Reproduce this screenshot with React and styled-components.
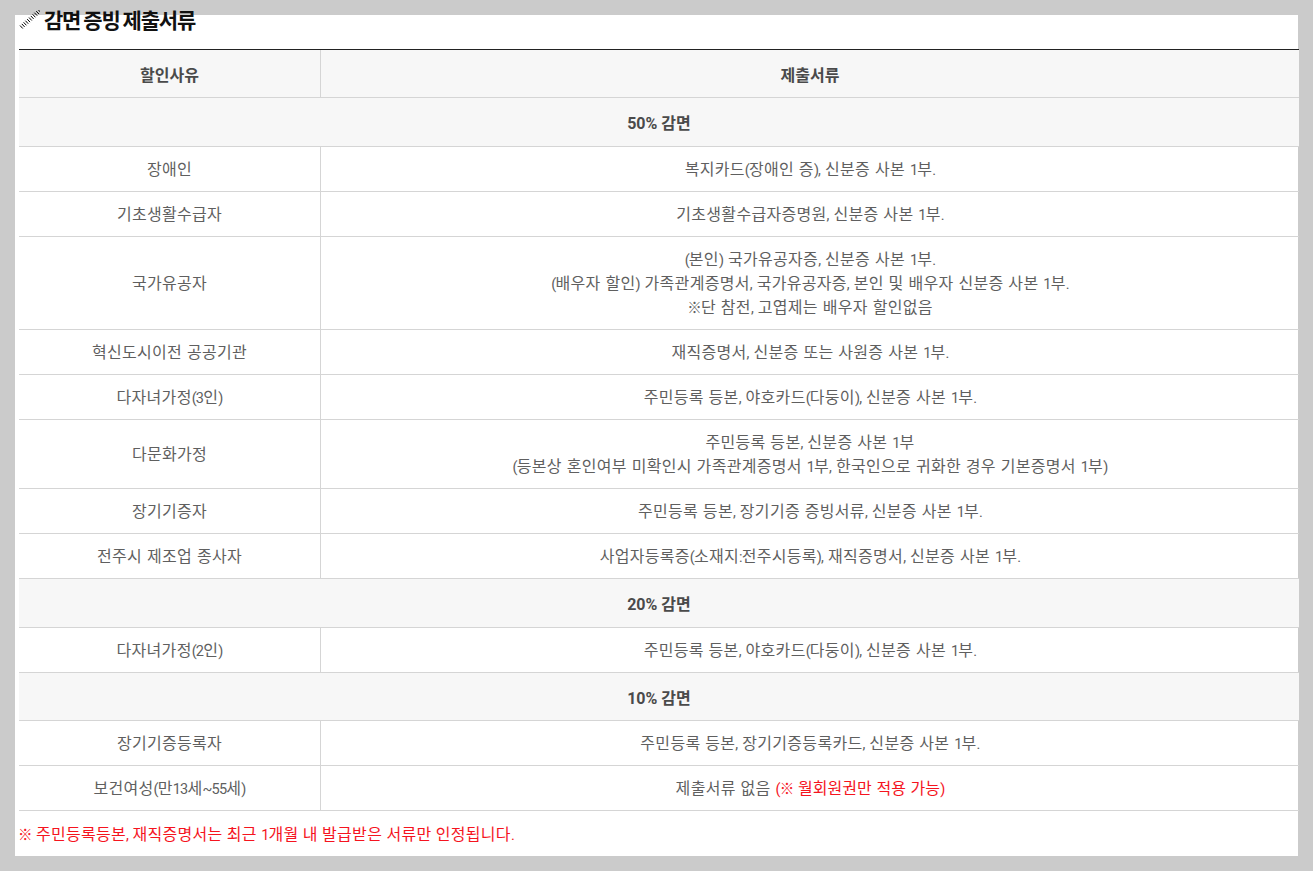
import React from 'react';
import styled, { createGlobalStyle } from 'styled-components';

const GlobalStyle = createGlobalStyle`
  html, body {
    margin: 0;
    padding: 0;
    background: #cbcbcb;
  }
  body {
    font-family: Roboto, "Noto Sans CJK KR", sans-serif;
    font-size: 16px;
    color: #5f5f5f;
  }
`;

const Page = styled.div`
  padding: 15px;
  height: 871px;
  box-sizing: border-box;
  overflow: hidden;
`;

const Panel = styled.div`
  display: flow-root;
  background: #fff;
  height: 841px;
  padding-left: 4px;
  box-sizing: border-box;
`;

const Title = styled.h3`
  display: flex;
  align-items: flex-start;
  gap: 4px;
  margin: -10px 0 0;
  height: 44px;
  font-family: "Noto Sans CJK KR", sans-serif;
  font-size: 21px;
  line-height: 28px;
  font-weight: 700;
  letter-spacing: -1.2px;
  word-spacing: -0.5px;
  color: #111;
`;

const TitleIcon = styled.svg`
  flex: none;
  margin-top: 5px;
`;

const Table = styled.table`
  width: 1280px;
  border-collapse: separate;
  border-spacing: 0;
  table-layout: fixed;
  border-top: 1px solid #222;
`;

const HeadCell = styled.th`
  background: #f7f7f7;
  padding: ${p => (p.$compact ? '14px 0 9px' : '14px 0 10px')};
  line-height: 24px;
  font-weight: 700;
  font-size: 16px;
  color: #4a4a4a;
  text-align: center;
  border-bottom: 1px solid #d5d5d5;
  border-right: ${p => (p.$divide ? '1px solid #d5d5d5' : '0')};
`;

const Cell = styled.td`
  padding: 11px 0 9px;
  line-height: 24px;
  letter-spacing: 0.3px;
  word-spacing: 0.6px;
  text-align: center;
  color: #5f5f5f;
  border-bottom: 1px solid #d5d5d5;
  border-right: ${p => (p.$divide ? '1px solid #d5d5d5' : '0')};
`;

// digits and punctuation run narrower than the hangul around them
const Latin = styled.span`
  font-size: 14.5px;
  line-height: 1;
  letter-spacing: -0.8px;
`;

const Red = styled.span`
  color: #f5141e;
  letter-spacing: 0.05px;
`;

const Note = styled.p`
  margin: 12px 0 0 -1px;
  line-height: 24px;
  letter-spacing: 0.3px;
  color: #f5141e;
`;

const narrow = text =>
  text.split(/([^\s\uAC00-\uD7A3]+)/).map((part, i) => (i % 2 ? <Latin key={i}>{part}</Latin> : part));

const ticks = [];
for (let i = 0; i < 11; i++) {
  const x = 1 + i * 1.8;
  const y = 15.5 - i * 1.6;
  ticks.push(`M${x} ${y}l2.8 3`);
}

const sections = [
  {
    group: '50% 감면',
    rows: [
      ['장애인', ['복지카드(장애인 증), 신분증 사본 1부.']],
      ['기초생활수급자', ['기초생활수급자증명원, 신분증 사본 1부.']],
      ['국가유공자', ['(본인) 국가유공자증, 신분증 사본 1부.', '(배우자 할인) 가족관계증명서, 국가유공자증, 본인 및 배우자 신분증 사본 1부.', '※단 참전, 고엽제는 배우자 할인없음']],
      ['혁신도시이전 공공기관', ['재직증명서, 신분증 또는 사원증 사본 1부.']],
      ['다자녀가정(3인)', ['주민등록 등본, 야호카드(다둥이), 신분증 사본 1부.']],
      ['다문화가정', ['주민등록 등본, 신분증 사본 1부', '(등본상 혼인여부 미확인시 가족관계증명서 1부, 한국인으로 귀화한 경우 기본증명서 1부)']],
      ['장기기증자', ['주민등록 등본, 장기기증 증빙서류, 신분증 사본 1부.']],
      ['전주시 제조업 종사자', ['사업자등록증(소재지:전주시등록), 재직증명서, 신분증 사본 1부.']],
    ],
  },
  {
    group: '20% 감면',
    rows: [['다자녀가정(2인)', ['주민등록 등본, 야호카드(다둥이), 신분증 사본 1부.']]],
  },
  {
    group: '10% 감면',
    compact: true,
    rows: [['장기기증등록자', ['주민등록 등본, 장기기증등록카드, 신분증 사본 1부.']]],
  },
];

export default function App() {
  return (
    <Page>
      <GlobalStyle />
      <Panel>
        <Title>
          <TitleIcon width="21" height="22" viewBox="0 0 21 22">
            <path d={ticks.join('')} stroke="#000" strokeWidth="1" fill="none" />
          </TitleIcon>
          감면 증빙 제출서류
        </Title>
        <Table>
          <colgroup>
            <col style={{ width: 302 }} />
            <col />
          </colgroup>
          <thead>
            <tr>
              <HeadCell $divide $compact>할인사유</HeadCell>
              <HeadCell $compact>제출서류</HeadCell>
            </tr>
          </thead>
          <tbody>
            {sections.map(section => (
              <React.Fragment key={section.group}>
                <tr>
                  <HeadCell colSpan={2} $compact={section.compact}>{section.group}</HeadCell>
                </tr>
                {section.rows.map(([name, lines]) => (
                  <tr key={name}>
                    <Cell $divide>{narrow(name)}</Cell>
                    <Cell>
                      {lines.map(line => (
                        <div key={line}>{narrow(line)}</div>
                      ))}
                    </Cell>
                  </tr>
                ))}
              </React.Fragment>
            ))}
            <tr>
              <Cell $divide>{narrow('보건여성(만13세~55세)')}</Cell>
              <Cell>
                제출서류 없음 <Red>{narrow('(※ 월회원권만 적용 가능)')}</Red>
              </Cell>
            </tr>
          </tbody>
        </Table>
        <Note>{narrow('※ 주민등록등본, 재직증명서는 최근 1개월 내 발급받은 서류만 인정됩니다.')}</Note>
      </Panel>
    </Page>
  );
}
